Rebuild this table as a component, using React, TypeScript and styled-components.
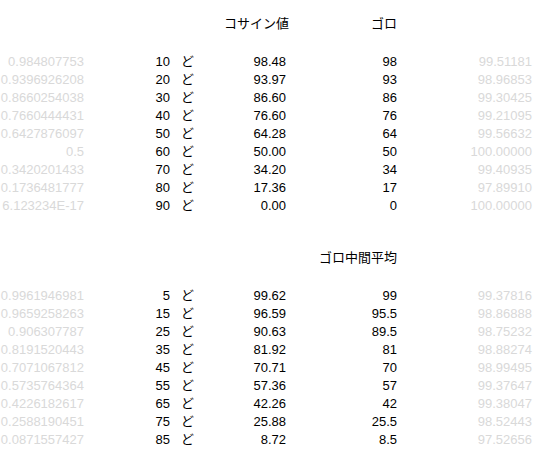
import React, { FC } from 'react';
import styled, { createGlobalStyle } from 'styled-components';

const GlobalStyle = createGlobalStyle`
  html, body {
    margin: 0;
    padding: 0;
    background: #ffffff;
  }
  body {
    font-family: "Liberation Sans", "Noto Sans CJK JP", sans-serif;
    font-size: 13px;
    color: #000000;
  }
`;

type Row = [string, string, string, string, string];

const upper: Row[] = [
  ['0.984807753', '10', '98.48', '98', '99.51181'],
  ['0.9396926208', '20', '93.97', '93', '98.96853'],
  ['0.8660254038', '30', '86.60', '86', '99.30425'],
  ['0.7660444431', '40', '76.60', '76', '99.21095'],
  ['0.6427876097', '50', '64.28', '64', '99.56632'],
  ['0.5', '60', '50.00', '50', '100.00000'],
  ['0.3420201433', '70', '34.20', '34', '99.40935'],
  ['0.1736481777', '80', '17.36', '17', '97.89910'],
  ['6.123234E-17', '90', '0.00', '0', '100.00000'],
];

const lower: Row[] = [
  ['0.9961946981', '5', '99.62', '99', '99.37816'],
  ['0.9659258263', '15', '96.59', '95.5', '98.86888'],
  ['0.906307787', '25', '90.63', '89.5', '98.75232'],
  ['0.8191520443', '35', '81.92', '81', '98.88274'],
  ['0.7071067812', '45', '70.71', '70', '98.99495'],
  ['0.5735764364', '55', '57.36', '57', '99.37647'],
  ['0.4226182617', '65', '42.26', '42', '99.38047'],
  ['0.2588190451', '75', '25.88', '25.5', '98.52443'],
  ['0.0871557427', '85', '8.72', '8.5', '97.52656'],
];

const Sheet = styled.div`
  width: 538px;
  padding-top: 17px;
  display: flex;
  flex-direction: column;
`;

const Block = styled.section`
  display: flex;
  flex-direction: column;
  margin-bottom: 36px;
`;

const Line = styled.div<{ $head?: boolean }>`
  display: grid;
  grid-template-columns: 86px 86px 52px 64px 111px 135px;
  height: 18px;
  line-height: ${(p) => (p.$head ? '13px' : '18px')};
  white-space: nowrap;
`;

const Blank = styled.div`
  height: 18px;
`;

const Cell = styled.div<{ $muted?: boolean }>`
  text-align: right;
  padding-right: 2px;
  overflow: visible;
  color: ${(p) => (p.$muted ? '#d9d9d9' : '#000000')};
`;

const Unit = styled.div`
  padding-left: 9px;
`;

const Label = styled.div<{ $col: number }>`
  grid-column: ${(p) => p.$col};
  text-align: right;
  padding-right: 2px;
`;

const DataRows: FC<{ rows: Row[] }> = ({ rows }) => (
  <>
    {rows.map((r) => (
      <Line key={r[1]}>
        <Cell $muted>{r[0]}</Cell>
        <Cell>{r[1]}</Cell>
        <Unit>ど</Unit>
        <Cell>{r[2]}</Cell>
        <Cell>{r[3]}</Cell>
        <Cell $muted>{r[4]}</Cell>
      </Line>
    ))}
  </>
);

const App: FC = () => {
  return (
    <>
      <GlobalStyle />
      <Sheet>
        <Block>
          <Line $head>
            <Label $col={4}>コサイン値</Label>
            <Label $col={5}>ゴロ</Label>
          </Line>
          <Blank />
          <DataRows rows={upper} />
        </Block>
        <Block>
          <Line $head>
            <Label $col={5}>ゴロ中間平均</Label>
          </Line>
          <Blank />
          <DataRows rows={lower} />
        </Block>
      </Sheet>
    </>
  );
};

export default App;
